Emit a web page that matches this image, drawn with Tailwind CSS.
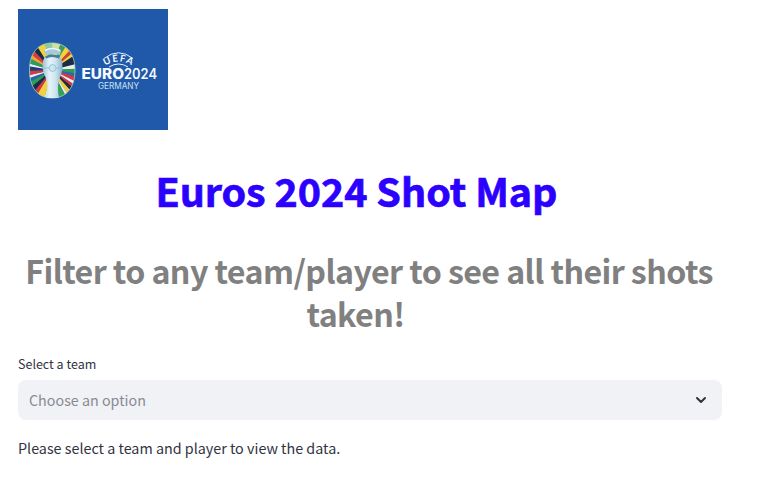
<!DOCTYPE html>
<html lang="en">
<head>
<meta charset="utf-8">
<title>Euros 2024 Shot Map</title>
<script src="https://cdn.jsdelivr.net/npm/@tailwindcss/browser@4"></script>
</head>
<body class="bg-white text-[#31333f] font-['Noto_Sans_CJK_SC',sans-serif] overflow-hidden">
<main class="w-[704px] ml-[18px] pt-[9px] flex flex-col">
  <svg class="w-[150px] h-[121px] block" viewBox="0 0 150 121">
    <defs>
      <clipPath id="badge"><path d="M34 34C47 34 57 43 57 61S48 89 34 89 11.500 79 11.500 61 21 34 34 34Z"/></clipPath>
      <linearGradient id="silver"><stop offset="0" stop-color="#9cc4da"/><stop offset=".35" stop-color="#e6f4f8"/><stop offset=".65" stop-color="#cde5ee"/><stop offset="1" stop-color="#8ab4d0"/></linearGradient>
      <path id="arc" d="M84 59Q100.500 46 117 59"/>
    </defs>
    <rect width="150" height="121" fill="#2059a9"/>
    <g clip-path="url(#badge)"><g id="rays"></g></g>
    <path d="M34 34C47 34 57 43 57 61S48 89 34 89 11.500 79 11.500 61 21 34 34 34Z" fill="none" stroke="#a9d5b8" stroke-width=".8"/>
    <path d="M27 48Q34 45 42 48C45.500 52 45 62 42 68Q38.500 76 41 89H28Q31 76 27.500 68C24 62 23.500 52 27 48Z" fill="url(#silver)"/>
    <path d="M27 47.500Q34 43.500 42 47.500L41 49.500Q34 46.500 28 49.500Z" fill="#477ca2"/>
    <path d="M26 41Q34 36 43 41L42 46Q34 43 27 46Z" fill="#a9c9da"/>
    <path d="M27 41.500Q34 37.500 42 41.500" fill="none" stroke="#e9f6fa" stroke-width="1.500"/>
    <path d="M24.500 59H44.500" stroke="#86b6d0" stroke-width=".7"/>
    <circle cx="34.500" cy="59" r="3.500" fill="#c9e5ee" stroke="#86b6d0" stroke-width=".7"/>
    <g fill="none" stroke="#e5f3fb" stroke-width="1"><path d="M86 49.500Q100.500 38 115 49.500"/><path d="M91 58Q100.500 52 110 58"/></g>
    <g fill="#f4faff">
      <text class="font-['Lato',sans-serif]" font-size="9.500" font-weight="700" letter-spacing="1.300"><textPath href="#arc" startOffset="51%" text-anchor="middle">UEFA</textPath></text>
      <text class="font-['Inter',sans-serif]" x="63.500" y="70.300" font-size="14" font-weight="800" textLength="42.500" lengthAdjust="spacingAndGlyphs">EURO</text>
      <text class="font-['Inter',sans-serif]" x="106" y="70.300" font-size="14" font-weight="600" textLength="33" lengthAdjust="spacingAndGlyphs">2024</text>
      <text class="font-['Inter',sans-serif]" x="80" y="80" font-size="8.300" fill="#c8e0f4" textLength="41" lengthAdjust="spacingAndGlyphs">GERMANY</text>
    </g>
  </svg>
  <h1 class="mt-[33px] h-[53px] text-[39.4px] leading-[53px] font-bold text-center text-[#2b00ff] whitespace-nowrap [-webkit-text-stroke:0.7px_#2b00ff]">Euros 2024 Shot Map<span class="inline-block w-[27px]"></span></h1>
  <h2 class="mt-[33px] h-[86px] text-[32.200px] leading-[43px] tracking-[-0.59px] font-bold text-center text-[#808080] whitespace-nowrap relative -left-px">Filter to any team/player to see all their shots<br>taken!<span class="inline-block w-[27px]"></span></h2>
  <label class="mt-[19px] h-[20px] text-[12.500px] leading-[20px]">Select a team</label>
  <div class="mt-[6px] h-[40px] rounded-lg bg-[#f0f2f6] flex items-center justify-between pl-[11px] pr-[13px]">
    <span class="text-[14.300px] leading-[24px] text-[#898a92]">Choose an option</span>
    <svg class="w-4 h-4" viewBox="0 0 16 16" fill="none" stroke="#31333f" stroke-width="2" stroke-linecap="round" stroke-linejoin="round"><path d="M4 6 8 10l4-4"/></svg>
  </div>
  <p class="mt-[16px] text-[14.340px] leading-[24px]">Please select a team and player to view the data.</p>
</main>
<script>
  // Flag-coloured rays, clockwise from the top: [end angle in degrees, colour]
  const rays = [[18,'#cfe0a0'],[30,'#3f9d5c'],[42,'#f2d23a'],[50,'#d93f35'],[57,'#f2d23a'],[76,'#1d2c45'],[87,'#e9eee9'],[98,'#2d9c58'],[106,'#3565a8'],[116,'#d93645'],[123,'#e9eee9'],[130,'#d93645'],[138,'#1d2c45'],[147,'#f2c93a'],[152,'#e9eee9'],[168,'#35a05a'],[195,'#dff0e0'],[211,'#f2d23a'],[220,'#d93645'],[231,'#1d2c45'],[242,'#2d9c58'],[250,'#2a62a8'],[257,'#e9eee9'],[268,'#d93645'],[279,'#1d3f78'],[286,'#e9eee9'],[298,'#2d9c58'],[307,'#f2a33a'],[317,'#d93f35'],[328,'#1d2c45'],[345,'#f2d23a'],[360,'#8cc9a0']];
  const point = d => (34 + 45 * Math.sin(d * Math.PI / 180)) + ' ' + (61 - 45 * Math.cos(d * Math.PI / 180));
  document.getElementById('rays').innerHTML = rays.map(([end, fill], i) =>
    `<path fill="${fill}" d="M34 61L${point(i ? rays[i - 1][0] : 0)}L${point(end + .5)}Z"/>`).join('');
</script>
</body>
</html>
